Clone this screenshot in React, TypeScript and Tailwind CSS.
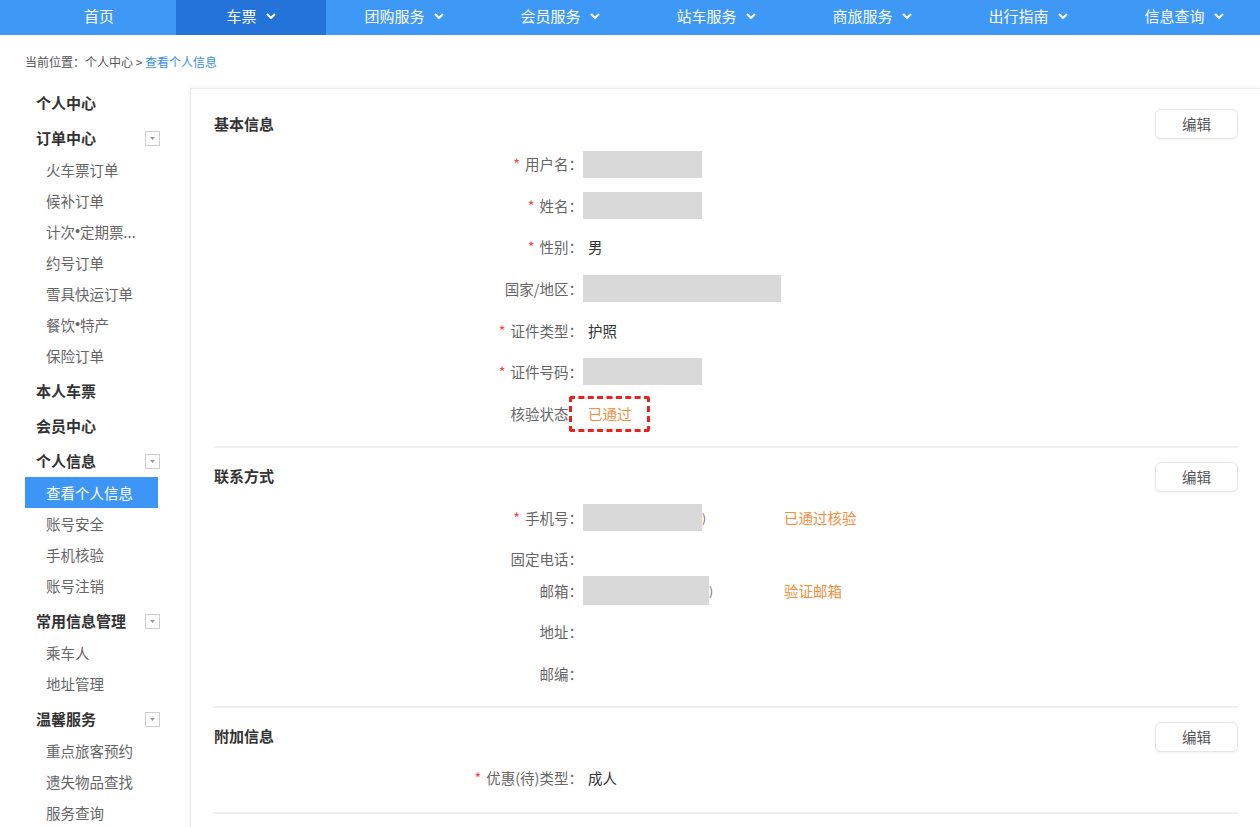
import type { ReactNode } from "react";

const NAV = [
  { name: "首页", w: "w-[154px]", chevron: false, active: false },
  { name: "车票", w: "w-[150px]", chevron: true, active: true },
  { name: "团购服务", w: "w-[156px]", chevron: true, active: false },
  { name: "会员服务", w: "w-[156px]", chevron: true, active: false },
  { name: "站车服务", w: "w-[156px]", chevron: true, active: false },
  { name: "商旅服务", w: "w-[156px]", chevron: true, active: false },
  { name: "出行指南", w: "w-[156px]", chevron: true, active: false },
  { name: "信息查询", w: "w-[156px]", chevron: true, active: false },
];

type SideItem = {
  name: ReactNode;
  key: string;
  header?: boolean;
  toggle?: boolean;
  active?: boolean;
  last?: boolean;
};

const Dot = () => <span className="font-['Liberation_Sans',sans-serif]">•</span>;

const SIDE: SideItem[] = [
  { key: "a", name: "个人中心", header: true },
  { key: "b", name: "订单中心", header: true, toggle: true },
  { key: "c", name: "火车票订单" },
  { key: "d", name: "候补订单" },
  { key: "e", name: <>计次<Dot />定期票...</> },
  { key: "f", name: "约号订单" },
  { key: "g", name: "雪具快运订单" },
  { key: "h", name: <>餐饮<Dot />特产</> },
  { key: "i", name: "保险订单", last: true },
  { key: "j", name: "本人车票", header: true },
  { key: "k", name: "会员中心", header: true },
  { key: "l", name: "个人信息", header: true, toggle: true },
  { key: "m", name: "查看个人信息", active: true },
  { key: "n", name: "账号安全" },
  { key: "o", name: "手机核验" },
  { key: "p", name: "账号注销", last: true },
  { key: "q", name: "常用信息管理", header: true, toggle: true },
  { key: "r", name: "乘车人" },
  { key: "s", name: "地址管理", last: true },
  { key: "t", name: "温馨服务", header: true, toggle: true },
  { key: "u", name: "重点旅客预约" },
  { key: "v", name: "遗失物品查找" },
  { key: "w", name: "服务查询" },
];

function Chevron() {
  return (
    <svg width="10" height="7" viewBox="0 0 10 7" fill="none">
      <path d="M1.5 1.5 L5 5 L8.5 1.5" stroke="white" strokeWidth="2" strokeLinecap="round" strokeLinejoin="round" />
    </svg>
  );
}

function ToggleBox() {
  return (
    <div className="w-[15px] h-[15px] border border-[#cfcfcf] flex items-center justify-center">
      <svg width="7" height="5" viewBox="0 0 7 5">
        <path d="M1 1 L6 1 L3.5 4 Z" fill="#999" />
      </svg>
    </div>
  );
}

function Row({
  label,
  required,
  hideColon,
  className = "",
  children,
}: {
  label: string;
  required?: boolean;
  hideColon?: boolean;
  className?: string;
  children?: ReactNode;
}) {
  return (
    <div className={`flex items-center h-[28px] ${className}`}>
      <div className="w-[369px] text-right text-[14.5px] text-[#666] whitespace-nowrap">
        {required && <span className="text-[#f04a4a] mr-[5px]">*</span>}
        {label}
        <span className={hideColon ? "invisible" : ""}>：</span>
      </div>
      <div className="flex items-center text-[14.5px] text-[#333]">{children}</div>
    </div>
  );
}

function Mask({ w }: { w: string }) {
  return <div className={`${w} h-[27px] bg-[#d9d9d9]`} />;
}

function SectionHead({ title }: { title: string }) {
  return (
    <div className="flex items-center justify-between h-[30px]">
      <span className="text-[15px] font-bold text-[#333]">{title}</span>
      <button className="w-[83px] h-[30px] rounded-[6px] border border-[#e6e6e6] bg-white shadow-[0_1px_3px_rgba(0,0,0,0.06)] text-[14.5px] text-[#555]">
        编辑
      </button>
    </div>
  );
}

function Divider() {
  return <div className="h-[2px] bg-[#f0f0f0]" />;
}

export default function App() {
  return (
    <div className="w-[1260px] h-[827px] overflow-hidden bg-white font-['Noto_Sans_CJK_SC','Noto_Sans',sans-serif]">
      {/* top nav */}
      <div className="h-[35px] bg-[#3d98f6] flex pl-[22px] overflow-hidden">
        {NAV.map((n) => (
          <div
            key={n.name}
            className={`${n.w} shrink-0 h-full pb-[3px] flex items-center justify-center gap-[9px] text-[15px] text-white ${n.active ? "bg-[#2473d8]" : ""}`}
          >
            <span>{n.name}</span>
            {n.chevron && <Chevron />}
          </div>
        ))}
      </div>

      {/* breadcrumb */}
      <div className="h-[49px] pt-[20px] pl-[25px] text-[12px] leading-[14px] text-[#555]">
        当前位置：个人中心 &gt; <span className="text-[#3a8ee6]">查看个人信息</span>
      </div>

      <div className="flex">
        {/* sidebar */}
        <div className="w-[135px] ml-[25px] shrink-0">
          {SIDE.map((s) =>
            s.header ? (
              <div key={s.key} className="h-[35px] pt-[3.5px] flex items-center justify-between pl-[11px]">
                <span className="text-[15px] font-bold text-[#333]">{s.name}</span>
                {s.toggle && <ToggleBox />}
              </div>
            ) : (
              <div
                key={s.key}
                className={`h-[31px] flex items-center pl-[21px] text-[14.5px] ${s.last ? "mb-[1px]" : ""} ${s.active ? "bg-[#3d96f5] text-white w-[133px]" : "text-[#666]"}`}
              >
                {s.name}
              </div>
            )
          )}
        </div>

        {/* main panel */}
        <div className="flex-1 ml-[30px] mt-[4px] border-l border-t border-[#ececec] shadow-[0_0_6px_rgba(0,0,0,0.06)] pl-[23px] pr-[22px] min-h-[760px]">
          {/* 基本信息 */}
          <div className="pt-[20px] pb-[18px]">
            <SectionHead title="基本信息" />
            <div className="mt-[11px] flex flex-col gap-[13.6px]">
              <Row label="用户名" required>
                <Mask w="w-[119px]" />
              </Row>
              <Row label="姓名" required>
                <Mask w="w-[119px]" />
              </Row>
              <Row label="性别" required>
                <span className="pl-[5px]">男</span>
              </Row>
              <Row label="国家/地区">
                <Mask w="w-[198px]" />
              </Row>
              <Row label="证件类型" required>
                <span className="pl-[5px]">护照</span>
              </Row>
              <Row label="证件号码" required>
                <Mask w="w-[119px]" />
              </Row>
              <Row label="核验状态" hideColon>
                <div className="relative">
                  <span className="pl-[5px] text-[#f39040]">已通过</span>
                  <div className="absolute left-[-14px] top-[-7px] w-[81px] h-[36px] border-[3px] border-dashed border-[#e8231f] rounded-[3px]" />
                </div>
              </Row>
            </div>
          </div>
          <Divider />

          {/* 联系方式 */}
          <div className="pt-[14px] pb-[18px]">
            <SectionHead title="联系方式" />
            <Row label="手机号" required className="mt-[12px]">
              <div className="w-[201px] flex items-center">
                <Mask w="w-[119px]" />
                <span className="text-[12px] text-[#666]">)</span>
              </div>
              <span className="text-[#f39040]">已通过核验</span>
            </Row>
            <Row label="固定电话" className="mt-[13px]" />
            <Row label="邮箱" className="mt-[4px]">
              <div className="w-[201px] flex items-center">
                <div className="w-[126px] h-[29px] bg-[#d9d9d9]" />
                <span className="text-[12px] text-[#666]">)</span>
              </div>
              <span className="text-[#f39040]">验证邮箱</span>
            </Row>
            <Row label="地址" className="mt-[13px]" />
            <Row label="邮编" className="mt-[14px]" />
          </div>
          <Divider />

          {/* 附加信息 */}
          <div className="pt-[14px] pb-[20px]">
            <SectionHead title="附加信息" />
            <Row label="优惠(待)类型" required className="mt-[12px]">
              <span className="pl-[5px]">成人</span>
            </Row>
          </div>
          <Divider />
        </div>
      </div>
    </div>
  );
}
